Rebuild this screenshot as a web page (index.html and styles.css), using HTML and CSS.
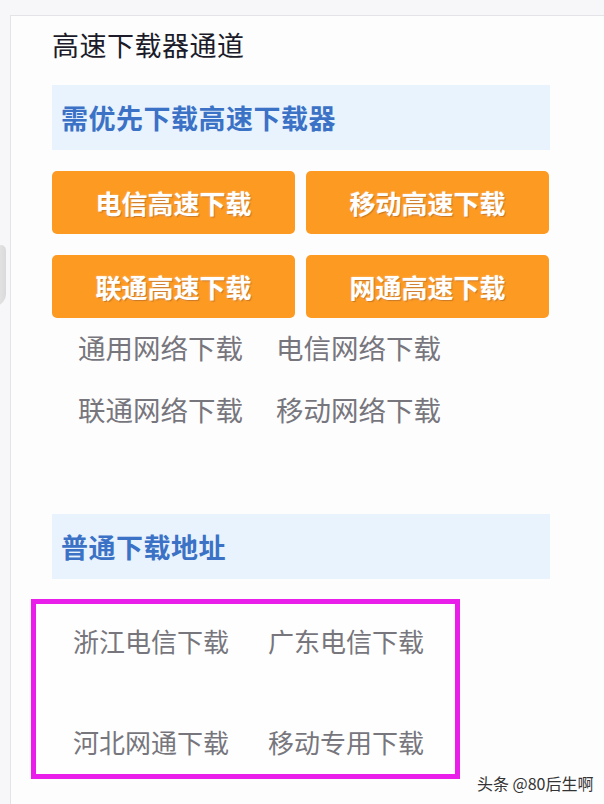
FILE: index.html
```html
<!DOCTYPE html>
<html lang="zh-CN">
<head>
<meta charset="utf-8">
<title>高速下载器通道</title>
<link rel="stylesheet" href="styles.css">
</head>
<body>
<div class="edge-blob"></div>
<div class="panel">
  <h2 class="title">高速下载器通道</h2>
  <div class="bar"><span>需优先下载高速下载器</span></div>
  <div class="btns">
    <a class="btn">电信高速下载</a>
    <a class="btn">移动高速下载</a>
    <a class="btn">联通高速下载</a>
    <a class="btn">网通高速下载</a>
  </div>
  <div class="links">
    <a>通用网络下载</a>
    <a>电信网络下载</a>
    <a>联通网络下载</a>
    <a>移动网络下载</a>
  </div>
  <div class="bar bar2"><span>普通下载地址</span></div>
  <div class="box">
    <a>浙江电信下载</a>
    <a>广东电信下载</a>
    <a>河北网通下载</a>
    <a>移动专用下载</a>
  </div>
</div>
<div class="watermark">头条 @80后生啊</div>
</body>
</html>
```

FILE: styles.css
```css
html, body {
  margin: 0;
  padding: 0;
}
body {
  background: #f7f7f9;
  font-family: "Noto Sans CJK SC", "Noto Sans", sans-serif;
  width: 604px;
  height: 804px;
  overflow: hidden;
  position: relative;
}
.panel {
  margin: 15px 0 0 10px;
  border-top: 1px solid #e3e3e8;
  border-left: 1px solid #e3e3e8;
  background: #fdfdfe;
  padding: 13px 0 0 41px;
  height: 800px;
  box-sizing: border-box;
}
.title {
  margin: 0;
  font-size: 27px;
  line-height: 32px;
  font-weight: 400;
  color: #1b1b29;
  letter-spacing: 0.5px;
}
.bar {
  margin-top: 24px;
  width: 498px;
  height: 65px;
  background: #e8f3fd;
  display: flex;
  align-items: center;
  padding-left: 9px;
  box-sizing: border-box;
}
.bar span {
  font-size: 27px;
  font-weight: 700;
  color: #3b72c6;
  letter-spacing: 0.5px;
}
.btns {
  margin-top: 21px;
  display: grid;
  grid-template-columns: 243px 243px;
  grid-auto-rows: 63px;
  column-gap: 11px;
  row-gap: 21px;
}
.btn {
  background: #fd9a22;
  border-radius: 5px;
  display: flex;
  align-items: center;
  justify-content: center;
  color: #fff;
  font-size: 26px;
  font-weight: 700;
  text-shadow: 1px 1px 1px rgba(160, 80, 10, 0.55), 0 0 2px rgba(255, 230, 200, 0.7);
}
.links {
  margin-top: -2px;
  padding-left: 26px;
  display: grid;
  grid-template-columns: 198px 198px;
  grid-auto-rows: 62px;
}
.links a, .box a {
  color: #77767d;
  display: flex;
  align-items: center;
  white-space: nowrap;
}
.links a {
  font-size: 27.5px;
}
.box a {
  font-size: 26px;
}
.bar2 {
  margin-top: 74px;
}
.box {
  margin: 20px 0 0 -21px;
  width: 429px;
  height: 180px;
  box-sizing: border-box;
  border: 5px solid #ea1eea;
  background: #fefefe;
  padding: 11px 0 0 37px;
  display: grid;
  grid-template-columns: 195px 195px;
  grid-auto-rows: 50px;
  row-gap: 51px;
}
.watermark {
  position: absolute;
  left: 477px;
  top: 772px;
  font-size: 16px;
  line-height: 22px;
  color: #333;
  text-shadow: 0 0 2px #fff;
}
.edge-blob {
  position: absolute;
  left: -6px;
  top: 245px;
  width: 12px;
  height: 60px;
  border-radius: 0 8px 8px 0;
  background: linear-gradient(90deg, #e6e6e6, #d2d2d2);
  transform: skewY(-25deg);
  opacity: 0.8;
}
```
